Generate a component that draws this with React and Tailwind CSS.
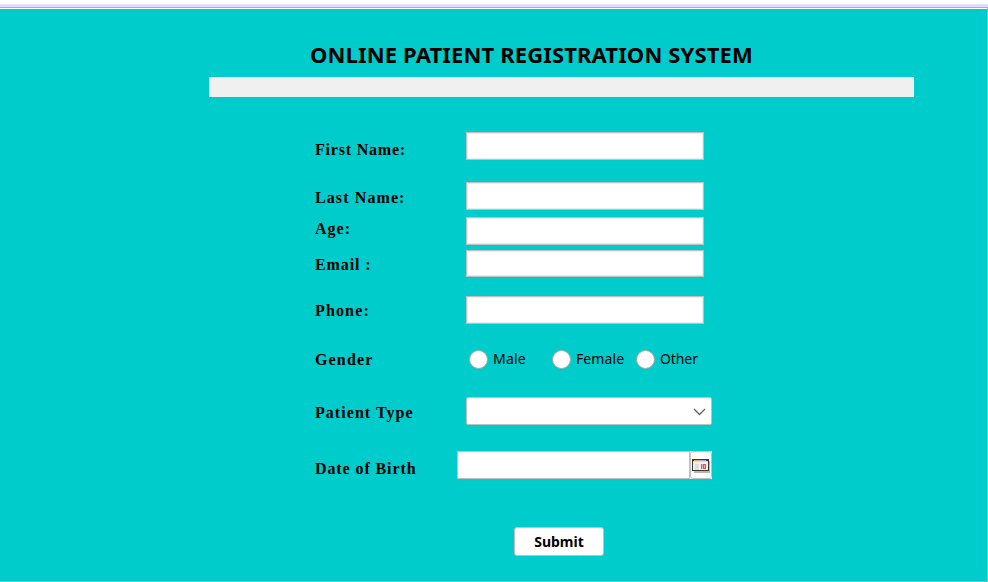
const fieldClass =
  "block h-[28px] w-[238px] border border-[#c0c0c0] bg-white shadow-[inset_0_0_0_1px_#ececec] outline-none";

function Row({ label, className, labelClass, children }) {
  return (
    <div className={"flex items-start " + className}>
      <label className={"w-[151px] shrink-0 whitespace-pre font-['Liberation_Serif',serif] text-[16px] leading-[20px] font-bold " + labelClass}>
        {label}
      </label>
      {children}
    </div>
  );
}

function Radio({ label, className, textClass }) {
  return (
    <label className={"flex items-start " + className}>
      <span className="mr-[5px] h-[19px] w-[19px] shrink-0 rounded-full border border-[#a9a9a9] bg-white" />
      <span className={"whitespace-nowrap font-['Noto_Sans',sans-serif] text-[14px] leading-[18px] " + textClass}>{label}</span>
    </label>
  );
}

function CalendarIcon() {
  return (
    <svg width="18" height="14" viewBox="0 0 18 14" shapeRendering="crispEdges" className="shrink-0">
      <path d="M2 2h16v12H2z" fill="#b9b5b3" />
      <path d="M0 0h17v12H0z" fill="#393636" />
      <path d="M1 2h15v9H1z" fill="#f4eeee" />
      <path d="M2 1h6v1H2z" fill="#f0a850" />
      <path d="M8 1h6v1H8z" fill="#8fb0e0" />
      <path d="M1 2h15v1H1z" fill="#d8dce4" />
      <path d="M3 5h4v6H3z" fill="#dedede" />
      <path d="M9 5h5v5H9z" fill="#f3b4b0" />
      <path d="M9 5h1v5H9zM11 5h3v1h-3zM11 9h3v1h-3zM11 6h1v3h-1zM13 6h1v3h-1z" fill="#d9534f" />
    </svg>
  );
}

export default function App() {
  return (
    <div className="flex h-[582px] w-[988px] flex-col overflow-hidden bg-white text-black">
      <div className="mt-[4px] h-[3px] shrink-0 bg-[#dfdffb]" />
      <div className="flex-1 border-t border-r border-b border-t-[#f5a623] border-r-[#f5a623] border-b-[#8fb5b0]">
        <div className="h-full border-t border-white bg-[#00cccc]">
          <h1 className="ml-[310px] pt-[30px] font-['Noto_Sans',sans-serif] text-[22px] leading-[30px] font-bold tracking-[0.13px] whitespace-nowrap">
            ONLINE PATIENT REGISTRATION SYSTEM
          </h1>
          <div className="mt-[8px] ml-[209px] h-[20px] w-[705px] bg-[#f0f0f0]" />
          <form className="ml-[315px] w-[400px] pt-[35px]">
            <Row label="First Name:" className="h-[50px]" labelClass="pt-[8px] tracking-[0.8px]">
              <input className={fieldClass} />
            </Row>
            <Row label="Last Name:" className="h-[35px]" labelClass="pt-[6px] tracking-[1.1px]">
              <input className={fieldClass} />
            </Row>
            <Row label="Age:" className="h-[33px]" labelClass="pt-[2px] tracking-[1px]">
              <input className={fieldClass} />
            </Row>
            <Row label="Email :" className="h-[46px]" labelClass="pt-[5px] tracking-[0.9px]">
              <input className="block h-[27px] w-[238px] border border-[#c0c0c0] bg-white shadow-[inset_0_0_0_1px_#ececec] outline-none" />
            </Row>
            <Row label="Phone:" className="h-[53px]" labelClass="pt-[5px] tracking-[1.15px]">
              <input className={fieldClass} />
            </Row>
            <Row label="Gender" className="h-[48px]" labelClass="pt-[1px] tracking-[1.15px]">
              <div className="flex pt-[1px] pl-[3px]">
                <Radio label="Male" className="w-[83px]" textClass="tracking-[0.2px]" />
                <Radio label="Female" className="w-[84px]" textClass="tracking-[0.1px]" />
                <Radio label="Other" className="w-[70px]" textClass="tracking-[-0.1px]" />
              </div>
            </Row>
            <Row label="Patient Type" className="h-[54px]" labelClass="pt-[6px] tracking-[1.05px]">
              <div className="flex h-[28px] w-[246px] items-center justify-end rounded-[2px] border border-[#c0c0c0] bg-white pt-[1px] pr-[5px]">
                <svg width="13" height="8" viewBox="0 0 13 8" fill="none" stroke="#606060" strokeWidth="1.3">
                  <path d="M1 1l5.5 5.5L12 1" />
                </svg>
              </div>
            </Row>
            <Row label="Date of Birth" className="h-[76px]" labelClass="pt-[8px] tracking-[0.9px]">
              <div className="-ml-[9px] flex h-[28px] bg-white">
                <input className="block h-[28px] w-[233px] border border-[#c0c0c0] bg-white outline-none" />
                <button type="button" className="flex h-[28px] w-[22px] items-center justify-center rounded-[3px] border border-[#c0c0c0] bg-white pt-[1px]">
                  <CalendarIcon />
                </button>
              </div>
            </Row>
            <button type="button" className="ml-[199px] block h-[29px] w-[90px] rounded-[3px] border border-[#c0c0c0] bg-white font-['Noto_Sans',sans-serif] text-[14px] leading-[27px] font-bold">
              Submit
            </button>
          </form>
        </div>
      </div>
    </div>
  );
}
